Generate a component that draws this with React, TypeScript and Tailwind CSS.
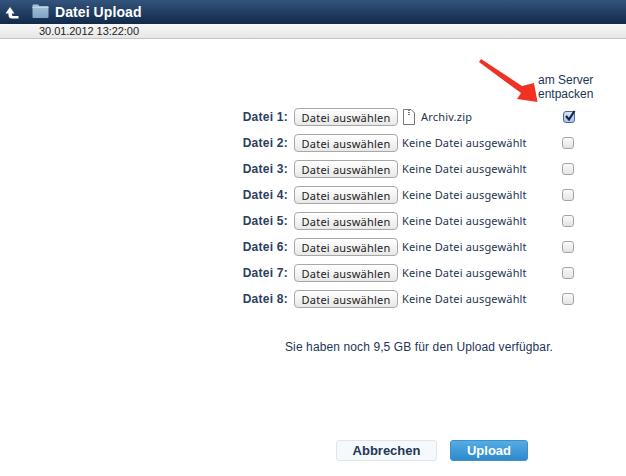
const rows = [1, 2, 3, 4, 5, 6, 7, 8];

const App = () => {
  return (
    <div className="w-[626px] h-[476px] bg-white overflow-hidden relative font-['Liberation_Sans',Arial,sans-serif]">
      <div className="h-[24px] flex items-center bg-gradient-to-b from-[#33547c] to-[#122a4a] pl-[5px]">
        <svg width="16" height="16" viewBox="0 0 16 16" className="mr-[11px]">
          <path d="M5 3 L9.5 9.5 H7 V11 Q7 12 8.5 12 H13.5 V14.5 H7 Q3.5 14.5 3.5 11 V9.5 H0.5 Z" fill="#fff" />
        </svg>
        <svg width="17" height="14" viewBox="0 0 17 14" className="mr-[6px] mb-[2px]">
          <defs>
            <linearGradient id="folder" x1="0" y1="0" x2="0" y2="1">
              <stop offset="0" stopColor="#a9c3d8" />
              <stop offset="1" stopColor="#7fa3c2" />
            </linearGradient>
          </defs>
          <path d="M0.5 1.5 Q0.5 0.5 1.5 0.5 H6 L7.5 2 H15.5 Q16.5 2 16.5 3 V13 Q16.5 14 15.5 14 H1.5 Q0.5 14 0.5 13 Z" fill="url(#folder)" />
          <rect x="0.5" y="3" width="16" height="1" fill="#c3d6e6" />
        </svg>
        <span className="text-white font-bold text-[14px] tracking-[0.08px]">Datei Upload</span>
      </div>
      <div className="h-[15px] bg-gradient-to-b from-[#f8f8f8] to-[#e6e6e6] border-b border-[#c4c4c4] pl-[39px] text-[11px] leading-[14px] tracking-[-0.05px] text-[#222]">
        30.01.2012 13:22:00
      </div>

      <div className="pt-[34px] flex flex-col">
        <div className="h-[24px] pl-[538px] text-[12px] leading-[14px] text-[#1d3557] mb-[7px]">
          am Server
          <br />
          entpacken
        </div>
        {rows.map((n) => (
          <div key={n} className="h-[26px] flex items-center">
            <span className="w-[288px] text-right text-[12px] tracking-[0.25px] font-bold text-[#2c3e5e]">Datei {n}:</span>
            <button className="ml-[6px] w-[104px] h-[18px] rounded-[4px] border border-[#a8a8a8] bg-gradient-to-b from-white to-[#e8e8e8] font-['Noto_Sans',sans-serif] text-[11px] tracking-[0.2px] leading-none text-[#222]">
              Datei auswählen
            </button>
            {n === 1 ? (
              <div className="ml-[5px] w-[160px] flex items-center text-[11px] tracking-[0.2px] font-['Noto_Sans',sans-serif] text-[#24344f]">
                <svg width="12" height="16" viewBox="0 0 12 16" className="mr-[6px]">
                  <path d="M0.5 0.5 H8 L11.5 4 V15.5 H0.5 Z" fill="#fff" stroke="#777" />
                  <path d="M6 1 V7" stroke="#777" strokeWidth="2" strokeDasharray="1 1" />
                </svg>
                Archiv.zip
              </div>
            ) : (
              <div className="ml-[4px] w-[160px] text-[11px] tracking-[0.16px] font-['Noto_Sans',sans-serif] text-[#24344f]">
                Keine Datei ausgewählt
              </div>
            )}
            {n === 1 ? (
              <span className="w-[12px] h-[12px] rounded-[3px] border border-[#4a6a9a] bg-gradient-to-b from-[#d5e3f5] to-[#a9c4e8] relative">
                <svg width="14" height="14" viewBox="0 0 14 14" className="absolute left-[-1px] top-[-3px]">
                  <path d="M3 7 L6 10.5 L11.5 2" fill="none" stroke="#14233f" strokeWidth="2.2" />
                </svg>
              </span>
            ) : (
              <span className="w-[12px] h-[12px] rounded-[3px] border border-[#a5a5a5] bg-gradient-to-b from-[#fafafa] to-[#e4e4e4]" />
            )}
          </div>
        ))}
        <div className="mt-[28px] pl-[285px] text-[12px] tracking-[0.11px] text-[#1d3557] leading-[14px]">
          Sie haben noch 9,5 GB für den Upload verfügbar.
        </div>
        <div className="mt-[86px] pl-[336px] flex gap-[13px]">
          <button className="w-[101px] h-[21px] rounded-[3px] border border-[#dfe5ec] bg-[#f6f9fc] text-[13px] font-bold leading-none text-[#233757]">
            Abbrechen
          </button>
          <button className="w-[78px] h-[21px] rounded-[3px] border border-[#3f8fc8] bg-gradient-to-b from-[#54ace4] to-[#2f8acb] text-[13px] font-bold leading-none text-white">
            Upload
          </button>
        </div>
      </div>

      <svg width="70" height="56" viewBox="0 0 70 56" className="absolute left-[475px] top-[52px]">
        <path d="M6 7 L47 34 L59 31 L62.5 50 L42 47 L46 41 L4 10 Z" fill="#ef3224" />
      </svg>
    </div>
  );
};

export default App;
